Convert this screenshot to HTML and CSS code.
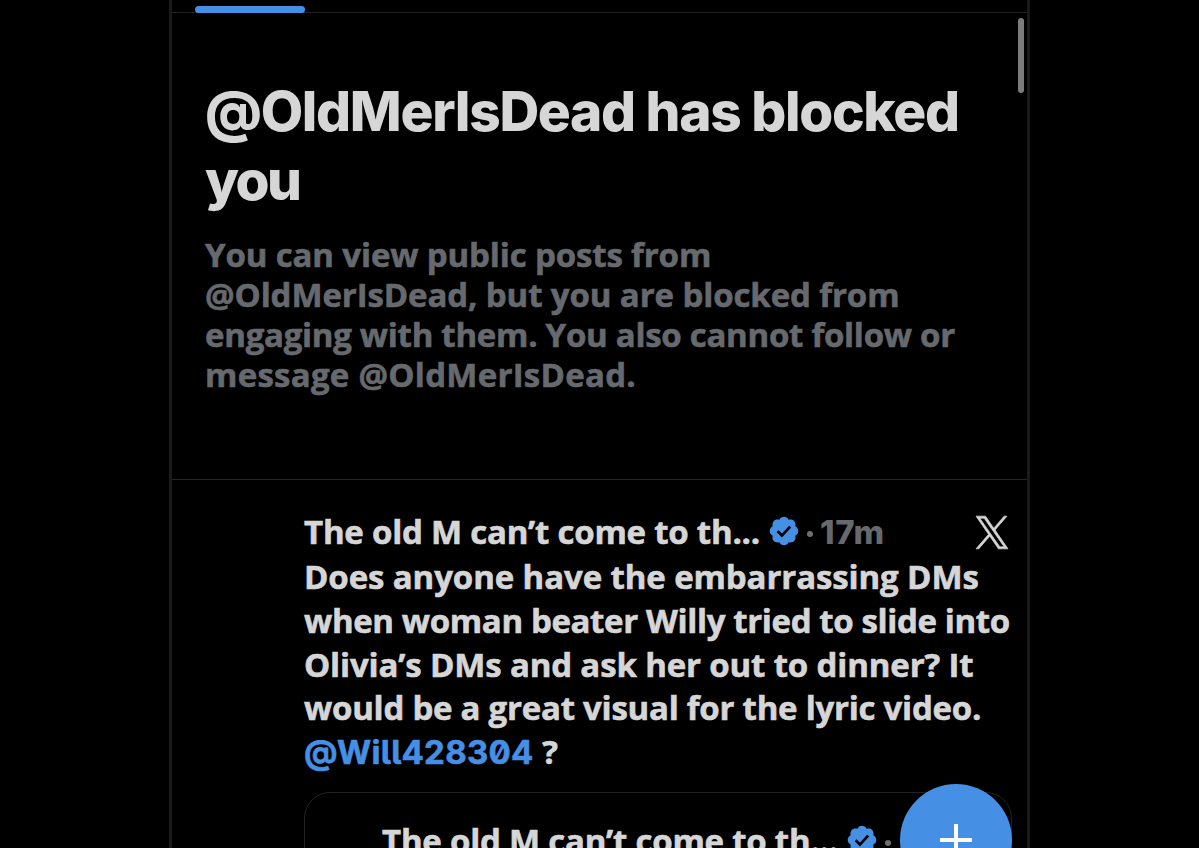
FILE: index.html
```html
<!DOCTYPE html>
<html lang="en">
<head>
<meta charset="utf-8">
<title>Profile</title>
<link rel="stylesheet" href="styles.css">
</head>
<body>
<svg class="defs" aria-hidden="true">
  <symbol id="verified" viewBox="1.5 1.25 21 21.5"><path d="M22.25 12c0-1.43-.88-2.67-2.19-3.34.46-1.39.2-2.9-.81-3.91s-2.52-1.27-3.91-.81c-.66-1.31-1.91-2.19-3.34-2.19s-2.67.88-3.33 2.19c-1.4-.46-2.91-.2-3.92.81s-1.26 2.52-.8 3.91c-1.31.67-2.2 1.91-2.2 3.34s.89 2.67 2.2 3.34c-.46 1.39-.21 2.9.8 3.91s2.52 1.26 3.91.81c.67 1.31 1.91 2.19 3.34 2.19s2.68-.88 3.34-2.19c1.39.45 2.9.2 3.91-.81s1.27-2.52.81-3.91c1.31-.67 2.19-1.91 2.19-3.34z" fill="#458fe5"/><path d="M7.4 12.2l3.1 3.1 5.9-6.4" fill="none" stroke="#000" stroke-width="2"/></symbol>
</svg>
<main class="column">
  <nav class="tabs"><div class="tab-active"></div></nav>
  <section class="blocked">
    <h1 class="title"><span class="line t1">@OldMerIsDead has blocked</span><span class="line t2">you</span></h1>
    <p class="desc"><span class="line d1">You can view public posts from</span><span class="line d2">@OldMerIsDead, but you are blocked from</span><span class="line d3">engaging with them. You also cannot follow or</span><span class="line d4">message @OldMerIsDead.</span></p>
  </section>
  <article class="post">
    <header class="head">
      <span class="name">The old M can’t come to th...</span>
      <svg class="badge"><use href="#verified"/></svg>
      <span class="dot"></span>
      <span class="time">17m</span>
      <svg class="xlogo" viewBox="0 0 1200 1227"><path d="M714.163 519.284L1160.89 0H1055.03L667.137 450.887L357.328 0H0L468.492 681.821L0 1226.37H105.866L515.491 750.218L842.672 1226.37H1200L714.137 519.284H714.163ZM569.165 687.828L521.697 619.934L144.011 79.6944H306.615L611.412 515.685L658.88 583.579L1055.08 1150.3H892.476L569.165 687.854V687.828Z"/></svg>
    </header>
    <p class="text"><span class="line b1">Does anyone have the embarrassing DMs</span><span class="line b2">when woman beater Willy tried to slide into</span><span class="line b3">Olivia’s DMs and ask her out to dinner? It</span><span class="line b4">would be a great visual for the lyric video.</span><span class="line"><a class="mention">@Will428304</a> ?</span></p>
    <div class="quote">
      <header class="head">
        <span class="name">The old M can’t come to th...</span>
        <svg class="badge"><use href="#verified"/></svg>
        <span class="dot"></span>
      </header>
    </div>
  </article>
  <div class="scrollbar"></div>
  <button class="fab" aria-label="New post"><svg class="plus" viewBox="0 0 32 32"><path d="M16 0v32M0 16h32" stroke="#fff" stroke-width="4"/></svg></button>
</main>
</body>
</html>
```
FILE: styles.css
```css
* { box-sizing: border-box; }
html, body { height: 100%; }
body {
  margin: 0;
  background: #000;
  color: #d6d6d6;
  font: 700 33px/44px "Open Sans", sans-serif;
  overflow: hidden;
}
.defs { display: none; }
.column {
  position: relative;
  width: 861px;
  height: 848px;
  margin-left: 169px;
  border: solid #1a1a1a;
  border-width: 0 3px;
  overflow: hidden;
}
.line { display: block; white-space: nowrap; }

.tabs { height: 13px; padding: 6px 0 0 23px; border-bottom: 1px solid #222; }
.tab-active { width: 110px; height: 7px; border-radius: 4px; background: #458fe5; }
.tabs .tab-active { margin-bottom: -1px; }

.blocked { height: 467px; padding: 64px 33px 0; border-bottom: 1px solid #262626; }
.title { margin: 0; font: 800 55px/69px Inter, sans-serif; }
.t1 { letter-spacing: -1.32px; }
.t2 { letter-spacing: -2.5px; }
.desc, .name, .text { -webkit-text-stroke: .6px currentColor; }
.desc { margin: 20px 0 0; line-height: 40px; color: #66696d; }
.d1 { letter-spacing: -.14px; }
.d2 { letter-spacing: -.11px; }
.d3 { letter-spacing: -.28px; }
.d4 { letter-spacing: .26px; }

.post { padding: 30px 15px 0 132px; }
.head { display: flex; height: 44px; align-items: center; }
.name { width: 465px; letter-spacing: -.23px; white-space: nowrap; }
.badge { width: 30px; height: 30px; margin-bottom: 2px; flex: none; }
.dot { width: 6px; height: 6px; margin: 4px 7px 0 8px; border-radius: 50%; background: #6c6f73; flex: none; }
.time { color: #66696d; font-family: Inter, sans-serif; font-weight: 800; letter-spacing: .6px; }
.xlogo { width: 32px; height: 33px; margin: 0 4px 0 auto; overflow: visible; }
.xlogo path { fill: #d6d6d6; stroke: #d6d6d6; stroke-width: 26; }
.text { margin: 1px 0 17px; line-height: 43.8px; }
.b1 { letter-spacing: -.11px; }
.b2 { letter-spacing: -.37px; }
.b3 { letter-spacing: -.15px; }
.b4 { letter-spacing: -.25px; }
.mention {
  color: #458fe5;
  font-family: Inter, sans-serif;
  font-feature-settings: "zero", "ss02";
  letter-spacing: .3px;
}
.quote {
  width: 708px;
  height: 120px;
  padding: 26px 0 0 77px;
  border: 1px solid #222;
  border-radius: 26px;
}

.scrollbar { position: absolute; top: 18px; right: 3px; width: 6px; height: 75px; border-radius: 3px; background: #7c7c7c; }
.fab {
  position: absolute;
  left: 728px;
  top: 784px;
  display: grid;
  place-items: center;
  width: 112px;
  height: 112px;
  padding: 0;
  border: 0;
  border-radius: 50%;
  background: #458fe5;
}
.plus { width: 32px; height: 32px; }
```
